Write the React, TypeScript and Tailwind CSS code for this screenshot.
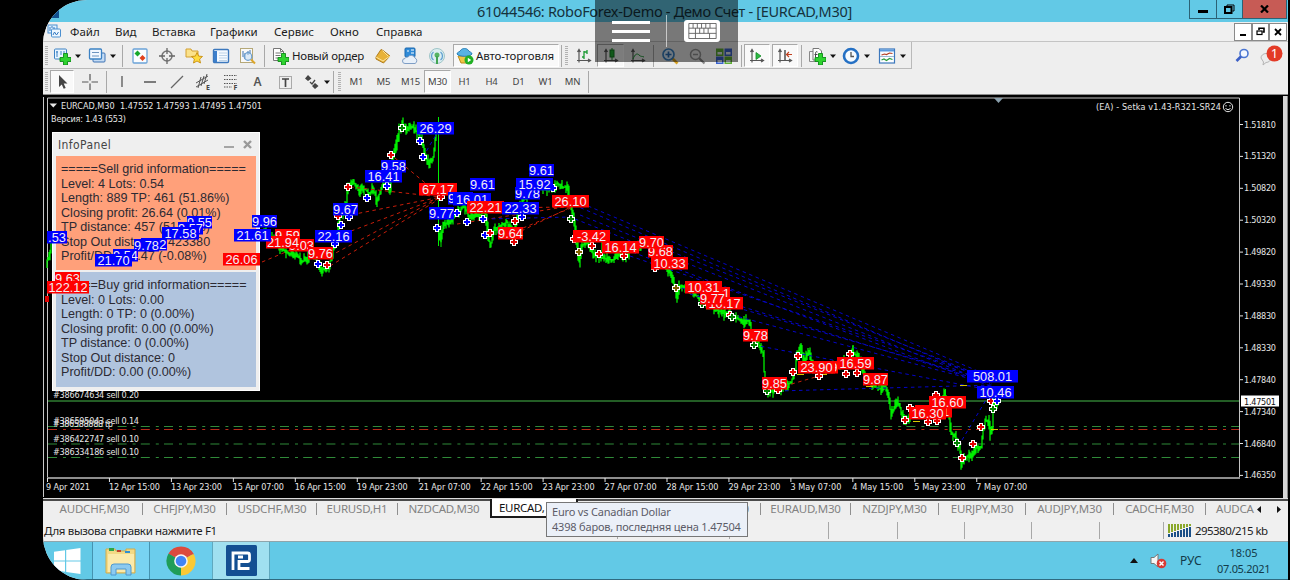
import type { ReactNode } from 'react';
import { clsx } from 'clsx';

type Pt = [number, number];

// x, y, width, text, colour
type Tag = [number, number, number, string, 'b' | 'r'];

const menu: [string, string][] = [
  ['Файл', 'w-[45px]'],
  ['Вид', 'w-[37px]'],
  ['Вставка', 'w-[58px]'],
  ['Графики', 'w-[64px]'],
  ['Сервис', 'w-[56px]'],
  ['Окно', 'w-[46px]'],
  ['Справка', 'w-[50px]'],
];

const timeframes = ['M1', 'M5', 'M15', 'M30', 'H1', 'H4', 'D1', 'W1', 'MN'];

const prices = ['1.51810', '1.51320', '1.50820', '1.50320', '1.49820', '1.49330', '1.48830', '1.48330', '1.47840', '1.47340', '1.46840', '1.46350'];

// label and drawn width
const dates: [string, number][] = [
  ['9 Apr 2021', 44], ['12 Apr 15:00', 51], ['13 Apr 23:00', 51], ['15 Apr 07:00', 51],
  ['16 Apr 15:00', 51], ['19 Apr 23:00', 51], ['21 Apr 07:00', 52], ['22 Apr 15:00', 52],
  ['23 Apr 23:00', 52], ['27 Apr 07:00', 52], ['28 Apr 15:00', 52], ['29 Apr 23:00', 52],
  ['3 May 07:00', 51], ['4 May 15:00', 51], ['5 May 23:00', 51], ['7 May 07:00', 51],
];

const sellInfo = [
  '=====Sell grid information=====',
  'Level: 4 Lots: 0.54',
  'Length: 889 TP: 461 (51.86%)',
  'Closing profit: 26.64 (0.01%)',
  'TP distance: 457 (51.41%)',
  'Stop Out distance: 423380',
  'Profit/DD: -85.47 (-0.08%)',
];

const buyInfo = [
  '=====Buy grid information=====',
  'Level: 0 Lots: 0.00',
  'Length: 0 TP: 0 (0.00%)',
  'Closing profit: 0.00 (0.00%)',
  'TP distance: 0 (0.00%)',
  'Stop Out distance: 0',
  'Profit/DD: 0.00 (0.00%)',
];

const quotes: Pt[][] = [
  [[47, 262], [50, 256], [52, 246]],
  [[260, 235], [266, 232], [272, 238], [280, 248], [290, 254], [300, 257], [303, 262], [310, 256], [316, 258], [320, 264], [323, 270], [330, 266], [332, 256], [337, 238], [341, 216], [347, 205], [348, 188], [352, 183], [356, 184], [360, 191], [366, 189], [370, 194], [374, 189], [378, 201], [382, 188], [387, 182], [391, 190], [393, 158], [398, 140], [400, 130], [403, 124], [406, 130], [414, 127], [420, 136], [423, 142], [426, 158], [430, 164], [434, 157], [436, 140], [437, 133]],
  [[439, 228], [441, 240], [444, 226], [450, 222], [458, 213], [465, 206], [470, 218], [480, 215], [486, 212], [489, 235], [491, 247], [495, 230], [500, 226], [508, 222], [514, 238], [518, 218], [520, 206], [530, 192], [540, 185], [546, 190], [553, 188], [558, 183], [563, 188], [568, 186], [571, 205], [574, 216], [577, 238], [580, 262], [582, 248], [587, 240], [591, 250], [596, 256], [606, 259], [614, 260], [620, 255], [628, 256], [633, 246], [642, 244], [650, 242], [656, 252], [666, 262], [671, 275], [675, 284], [677, 298], [680, 286], [690, 290], [702, 300], [714, 308], [725, 314], [735, 316], [744, 322], [750, 320], [753, 336], [758, 342], [764, 354], [766, 390], [772, 391], [780, 391], [786, 387], [792, 382], [796, 370], [797, 356], [801, 347], [805, 360], [810, 352], [814, 368], [826, 370], [838, 364], [848, 360], [853, 352], [858, 356], [864, 370], [872, 384], [880, 389], [886, 386], [889, 396], [892, 416], [897, 400], [901, 408], [905, 424], [912, 412], [925, 413], [935, 412], [945, 394], [949, 412], [952, 432], [958, 440], [961, 452], [962, 464], [966, 457], [972, 456], [977, 446], [982, 448], [984, 430], [986, 421], [989, 420], [991, 434], [993, 430], [993, 404], [996, 404], [1000, 402]],
];

const tags: Tag[] = [
  [47, 231, 20, '.53', 'b'],
  [187, 216, 25, '9.55', 'b'],
  [178, 222, 25, '9.57', 'b'],
  [162, 227, 37, '17.58', 'b'],
  [141, 238, 26, '9.72', 'b'],
  [134, 239, 25, '9.78', 'b'],
  [113, 249, 25, '9.54', 'b'],
  [95, 254, 37, '21.70', 'b'],
  [275, 229, 25, '9.59', 'r'],
  [289, 239, 25, '9.03', 'r'],
  [266, 236, 34, '21.94', 'r'],
  [252, 215, 25, '9.96', 'b'],
  [234, 229, 37, '21.61', 'b'],
  [223, 253, 37, '26.06', 'r'],
  [55, 272, 25, '9.63', 'r'],
  [47, 281, 42, '122.12', 'r'],
  [308, 247, 25, '9.76', 'r'],
  [315, 230, 37, '22.16', 'b'],
  [333, 203, 25, '9.67', 'b'],
  [381, 160, 25, '9.58', 'b'],
  [365, 170, 37, '16.41', 'b'],
  [417, 122, 37, '26.29', 'b'],
  [419, 183, 38, '67.17', 'r'],
  [448, 192, 25, '9.88', 'b'],
  [429, 207, 25, '9.77', 'b'],
  [453, 193, 38, '16.01', 'b'],
  [470, 178, 25, '9.61', 'b'],
  [467, 201, 37, '22.21', 'r'],
  [502, 202, 37, '22.33', 'b'],
  [515, 187, 25, '9.78', 'b'],
  [529, 164, 25, '9.61', 'b'],
  [516, 178, 37, '15.92', 'b'],
  [498, 227, 25, '9.64', 'r'],
  [552, 195, 37, '26.10', 'r'],
  [573, 230, 37, '-3.42', 'r'],
  [602, 241, 37, '16.14', 'r'],
  [648, 245, 25, '9.68', 'r'],
  [639, 236, 25, '9.70', 'r'],
  [651, 257, 37, '10.33', 'r'],
  [705, 287, 25, '9.91', 'r'],
  [706, 297, 37, '10.17', 'r'],
  [685, 281, 37, '10.31', 'r'],
  [700, 292, 25, '9.77', 'r'],
  [743, 329, 25, '9.78', 'r'],
  [762, 377, 25, '9.85', 'r'],
  [812, 361, 26, '9.89', 'r'],
  [798, 361, 37, '23.90', 'r'],
  [837, 357, 37, '16.59', 'r'],
  [863, 373, 25, '9.87', 'r'],
  [915, 405, 37, '16.11', 'r'],
  [909, 407, 37, '16.30', 'r'],
  [929, 396, 37, '16.60', 'r'],
  [967, 370, 51, '508.01', 'b'],
  [977, 386, 37, '10.46', 'b'],
];

// trade markers: x, y, fill
const marks: [number, number, string][] = [
  [318, 264, '#0000ff'], [327, 265, '#e00000'], [335, 244, '#0000ff'], [338, 216, '#e00000'], [341, 225, '#0000ff'],
  [348, 187, '#e00000'], [349, 217, '#0000ff'], [367, 198, '#0000ff'], [387, 186, '#0000ff'], [391, 155, '#e00000'],
  [402, 128, '#008000'], [420, 141, '#0000ff'], [423, 157, '#0000ff'], [441, 197, '#e00000'], [437, 228, '#0000ff'],
  [457, 213, '#0000ff'], [467, 222, '#0000ff'], [483, 219, '#0000ff'], [485, 235, '#0000ff'], [490, 233, '#e00000'],
  [515, 221, '#e00000'], [522, 217, '#0000ff'], [514, 242, '#e00000'], [553, 188, '#0000ff'], [571, 219, '#008000'],
  [574, 239, '#e00000'], [579, 252, '#806000'], [592, 246, '#e00000'], [599, 254, '#e00000'], [624, 256, '#e00000'],
  [655, 268, '#e00000'], [676, 288, '#806000'], [702, 304, '#008000'], [730, 315, '#e00000'], [732, 317, '#008000'],
  [754, 345, '#008000'], [767, 391, '#008000'], [778, 390, '#e00000'], [778, 384, '#e00000'], [793, 372, '#e00000'],
  [798, 356, '#e00000'], [819, 376, '#e00000'], [846, 374, '#e00000'], [850, 354, '#e00000'], [857, 373, '#e00000'],
  [910, 408, '#e00000'], [905, 420, '#e00000'], [928, 422, '#e00000'], [937, 421, '#e00000'], [936, 395, '#e00000'],
  [957, 443, '#008000'], [962, 458, '#e00000'], [973, 444, '#e00000'], [981, 427, '#e00000'], [991, 401, '#e00000'],
  [993, 409, '#008000'], [997, 401, '#0000ff'],
];

const redLinks = [
  'M395 158L441 196', 'M350 187L441 197', 'M345 216L441 197', 'M338 236L441 197', 'M330 256L441 197', 'M262 262L300 246', 'M330 266L441 198',
  'M457 224L571 206', 'M490 208L571 207', 'M515 234L571 207', 'M523 228L571 208', 'M778 388L819 376',
];

const blueLinks = [
  'M485 219L571 217', 'M588 206L992 377', 'M574 205L980 377', 'M580 215L992 380', 'M575 219L992 384', 'M600 240L990 386', 'M630 256L990 379',
  'M690 294L990 381', 'M675 286L990 383', 'M732 315L990 384', 'M754 345L990 390', 'M778 391L992 385', 'M962 440L992 390', 'M423 157L437 133',
];

function bars(points: Pt[]) {
  let seed = 7;
  const rnd = () => {
    seed = (seed * 16807) % 2147483647;
    return seed / 2147483647;
  };
  let d = '';
  for (let i = 0; i < points.length - 1; i++) {
    const [x0, y0] = points[i];
    const [x1, y1] = points[i + 1];
    const steps = Math.max(1, Math.round(x1 - x0));
    for (let s = 0; s < steps; s++) {
      const x = x0 + ((x1 - x0) * s) / steps;
      const a = y0 + ((y1 - y0) * s) / steps;
      const b = y0 + ((y1 - y0) * (s + 1)) / steps;
      const up = 0.5 + rnd() ** 2 * 6.5;
      const down = 0.5 + rnd() ** 2 * 6.5;
      d += `M${x.toFixed(1)} ${(Math.min(a, b) - up).toFixed(1)}V${(Math.max(a, b) + down).toFixed(1)}`;
    }
  }
  return d;
}

function Icon({ size = 18, children }: { size?: number; children: ReactNode }) {
  return (
    <svg width={size} height={size} viewBox="0 0 18 18" fill="none" className="shrink-0">
      {children}
    </svg>
  );
}

function Slot({ w, on, children }: { w: string; on?: boolean; children?: ReactNode }) {
  return (
    <div className={clsx('flex shrink-0 items-center justify-center', w, on ? 'h-[23px] border border-[#a9a9a9] border-r-white border-b-white bg-[#f9f9f9]' : 'h-full')}>
      {children}
    </div>
  );
}

function Sep({ w }: { w: string }) {
  return (
    <div className={clsx('flex h-full shrink-0 items-center justify-center', w)}>
      <div className="h-[22px] w-px bg-[#a8a8a8]" />
    </div>
  );
}

function Grip() {
  return (
    <div className="flex w-[7px] shrink-0 justify-center">
      <div className="h-5 w-[3px] bg-[repeating-linear-gradient(#b2b2b2_0_1px,#eeeeee_1px_2px)]" />
    </div>
  );
}

function Caret({ w = 'w-2' }: { w?: string }) {
  return (
    <div className={clsx('flex shrink-0 justify-center', w)}>
      <svg width="6" height="4" viewBox="0 0 6 4"><path d="M0 0.5h6L3 4z" fill="#111" /></svg>
    </div>
  );
}

const plus = <path d="M10.500 6.500h4v4h3.500v4h-3.500v3.500h-4v-3.500H7v-4h3.500z" fill="#2fd32f" stroke="#0c8a18" strokeWidth="0.9" />;
const axes = <path d="M4 15.500V3M2.500 5L4 2.500 5.500 5M2 13.500h13M13 12l2.500 1.500L13 15" stroke="#555" strokeWidth="1.200" />;

function TitleBar() {
  return (
    <div className="flex h-[22px] shrink-0 items-start bg-[#62c9e6]">
      <div className="flex h-[18px] w-[434px] items-end pl-1">
        <div className="h-3 w-3 bg-[#12508f]" />
      </div>
      <div className="w-[712px] text-[14.500px] leading-[22px] tracking-[-0.310px] whitespace-nowrap text-[#15323d]">61044546: RoboForex-Demo - Демо Счет - [EURCAD,M30]</div>
      <div className="flex h-[19px] w-[98px] border border-t-0 border-[#2b6275]">
        <div className="flex w-[27px] items-center justify-center border-r border-[#2b6275]">
          <div className="mt-1 h-[3px] w-[10px] bg-black" />
        </div>
        <div className="flex w-[26px] items-center justify-center border-r border-[#2b6275]">
          <svg width="11" height="10" viewBox="0 0 11 10" fill="none" stroke="#000"><path d="M3 2V1h7v6H8.500" /><rect x="1" y="3" width="6.500" height="6" strokeWidth="2" /></svg>
        </div>
        <div className="flex flex-1 items-center justify-center bg-[#c75b55]">
          <svg width="9" height="8" viewBox="0 0 9 8"><path d="M1 0.500l7 7M8 0.500l-7 7" stroke="#000" strokeWidth="2.200" /></svg>
        </div>
      </div>
    </div>
  );
}

function MenuBar() {
  return (
    <div className="flex h-5 shrink-0 items-center border-b border-[#c4c4c4] bg-[#f0f0f0]">
      <div className="flex w-[27px] pl-1">
        <svg width="15" height="15" viewBox="0 0 15 15" fill="none"><rect x="1" y="1" width="9" height="8" fill="#dff0ff" stroke="#4b8fd0" /><rect x="4.500" y="5" width="9" height="8" rx="1" fill="#eef7ff" stroke="#4b8fd0" /><path d="M6 11l1.500-3 2 3 2-3M3 3v4M5 2v2M7 3v2" stroke="#3579c0" /></svg>
      </div>
      {menu.map(([m, w]) => (
        <div key={m} className={clsx('shrink-0 text-[11.500px] whitespace-nowrap text-[#1c1c1c]', w)}>{m}</div>
      ))}
      <div className="ml-auto flex h-[18px] w-[54px] pr-px">
        <div className="flex flex-1 items-end justify-center border border-[#8a8a8a] bg-white pb-1"><div className="h-[2px] w-[6px] bg-black" /></div>
        <div className="flex flex-1 items-center justify-center border border-[#8a8a8a] bg-white">
          <svg width="9" height="9" viewBox="0 0 9 9" fill="none" stroke="#000" strokeWidth="1.200"><path d="M3 3V1.200h5V5H6.500" strokeWidth="1.600" /><rect x="1" y="4" width="5" height="3.500" /></svg>
        </div>
        <div className="flex flex-1 items-center justify-center border border-[#8a8a8a] bg-white">
          <svg width="8" height="8" viewBox="0 0 8 8"><path d="M1 1l6 6M7 1l-6 6" stroke="#000" strokeWidth="1.800" /></svg>
        </div>
      </div>
    </div>
  );
}

function MainToolbar() {
  return (
    <div className="flex h-[27px] shrink-0 items-center bg-[#eeeeee]">
      <div className="flex h-full w-[869px] shrink-0 items-center border-r border-b border-[#b9b9b9] pt-px">
        <Grip />
        <Slot w="w-6"><Icon><rect x="1.500" y="2" width="12" height="10" rx="1" fill="#e9f5ff" stroke="#3c82c4" /><path d="M4 4v6M3 5h2M8 4v4M11 4v3" stroke="#3c82c4" />{plus}</Icon></Slot>
        <Caret />
        <div className="w-[3px]" />
        <Slot w="w-6"><Icon><rect x="5" y="6" width="12" height="9" rx="1" fill="#c6dcf4" stroke="#3c72b4" /><rect x="1.500" y="2" width="12" height="10" rx="1" fill="#f2f8ff" stroke="#3c82c4" strokeWidth="1.300" /><path d="M4 5.500h7M4 9h7" stroke="#6d95c0" /></Icon></Slot>
        <Caret />
        <Sep w="w-[10px]" />
        <Slot w="w-[26px]"><Icon><rect x="2" y="2" width="14" height="14" rx="1" fill="#fbfdff" stroke="#6ba3d8" strokeWidth="1.300" /><path d="M6.500 3.500l3 3-3 3-3-3z" fill="#17a82a" /><path d="M11.500 8l3 3-3 3-3-3z" fill="#e0421e" /></Icon></Slot>
        <Slot w="w-[27px]"><Icon><circle cx="9" cy="9" r="5" stroke="#777" strokeWidth="1.500" /><path d="M9 1v6M9 11v6M1 9h6M11 9h6" stroke="#666" strokeWidth="1.300" /></Icon></Slot>
        <Slot w="w-[27px]"><Icon><path d="M1 2h5l1 2H13v6H1z" fill="#fbe28b" stroke="#d3a032" /><path d="M12 5.500l1.600 3.600 3.900.4-2.900 2.600.9 3.900-3.500-2-3.500 2 .9-3.900L6.500 9.500l3.900-.4z" fill="#ffdb3d" stroke="#c78d10" strokeWidth="0.900" /></Icon></Slot>
        <Slot w="w-[27px]"><Icon><rect x="1.500" y="2.500" width="15" height="13" rx="1" fill="#f5faff" stroke="#3c78bd" strokeWidth="1.400" /><path d="M2 4h3v11H2z" fill="#3d7fcb" /><path d="M7 6h8M7 8.500h8M7 11h8M7 13.500h8" stroke="#bdd3e8" /></Icon></Slot>
        <Slot w="w-[27px]"><Icon><rect x="1.500" y="1.500" width="12" height="14" fill="#f9f9f9" stroke="#b5a878" /><path d="M4 4v6M6 6v6M9 4v4M11 3v4" stroke="#3f74b0" /><circle cx="9" cy="9.500" r="3.800" fill="#bfdcf580" stroke="#6c9fcf" strokeWidth="1.200" /><path d="M12 12.500l4 4" stroke="#dba52a" strokeWidth="2" /></Icon></Slot>
        <Sep w="w-[7px]" />
        <Slot w="w-6"><Icon><path d="M2.500 1.500h7l3 3v9h-10z" fill="#fff" stroke="#777" /><path d="M9.500 1.500v3h3M4.500 6h6M4.500 8.500h5M4.500 11h3" stroke="#777" />{plus}</Icon></Slot>
        <div className="w-[77px] shrink-0 text-[11.500px] tracking-[-0.250px] whitespace-nowrap text-[#1c1c1c]">Новый ордер</div>
        <Slot w="w-[27px]"><Icon><path d="M2 10L7 2.500l2 1L16 9l-6.500 7L2 12z" fill="#e8b238" stroke="#a87310" strokeWidth="0.900" /><path d="M2 10l7 4L16 9M8.500 3.500L14 9" stroke="#fde49a" /></Icon></Slot>
        <Slot w="w-[27px]"><Icon><rect x="4" y="1" width="10" height="9" rx="1" fill="#2f8bd8" stroke="#1c68ae" /><path d="M6 4h2M10 3h3M10 6h3" stroke="#fff" /><path d="M4 16.500h10a3 3 0 0 0 0-5.500 4 4 0 0 0-7-1 3 3 0 0 0-3 1.500 2.500 2.500 0 0 0 0 5z" fill="#e8f0f9" stroke="#7f9ec5" /></Icon></Slot>
        <Slot w="w-[27px]"><Icon><circle cx="9" cy="9" r="7.500" fill="#dbeef0" stroke="#9fc5c8" /><path d="M5.500 13a5 5 0 0 1 0-8M12.500 13a5 5 0 0 0 0-8" stroke="#5f9fd0" strokeWidth="1.300" /><circle cx="9" cy="8" r="2.500" fill="#56b463" /><path d="M9 9v8" stroke="#43a552" strokeWidth="2" /></Icon></Slot>
        <div className="w-[3px]" />
        <div className="flex h-[23px] w-[106px] shrink-0 items-center border border-[#a9a9a9] border-r-white border-b-white bg-[#f9f9f9] pl-[2px]">
          <Icon><path d="M2 9h13l-3 7H5z" fill="#f0c545" stroke="#bb8b1c" /><path d="M1 7c0-2 3-2 4-4 1-2 6-2 7 0s4 2 4 4c-2 3-13 3-15 0z" fill="#57b2e5" stroke="#2a7fb6" /><circle cx="13" cy="13" r="4.500" fill="#22b025" /><path d="M11.800 10.800v4.400L15.200 13z" fill="#fff" /></Icon>
          <div className="pl-[2px] text-[11.500px] tracking-[-0.150px] whitespace-nowrap text-[#1c1c1c]">Авто-торговля</div>
        </div>
        <Sep w="w-[4px]" />
        <Grip />
        <Slot w="w-[27px]"><Icon>{axes}<path d="M9 4v8M9 10H7M9 5h2.500M12 3v4" stroke="#1d9b35" strokeWidth="1.300" /></Icon></Slot>
        <Slot w="w-[27px]" on><Icon>{axes}<path d="M10 1v12" stroke="#158a25" /><rect x="8" y="3" width="4" height="7" fill="#22b235" stroke="#137a20" /></Icon></Slot>
        <Slot w="w-[27px]"><Icon>{axes}<path d="M4 12c2-5 4-6 6-4s3 1 5 2" stroke="#1d9b35" /></Icon></Slot>
        <Sep w="w-[5px]" />
        <Slot w="w-[27px]"><Icon><path d="M11 11l5.500 5.500" stroke="#d8a223" strokeWidth="2.600" /><circle cx="7.500" cy="7.500" r="5.500" fill="#dcefff" stroke="#3d85c6" strokeWidth="1.700" /><path d="M4.500 7.500h6M7.500 4.500v6" stroke="#2a6fb8" strokeWidth="1.700" /></Icon></Slot>
        <Slot w="w-[27px]"><Icon><path d="M11 11l5.500 5.500" stroke="#888" strokeWidth="2.200" /><circle cx="7.500" cy="7.500" r="5" fill="#eee" stroke="#999" strokeWidth="1.500" /><path d="M5 7.500h5" stroke="#999" strokeWidth="1.500" /></Icon></Slot>
        <Slot w="w-[28px]"><Icon><path d="M1 1.500h7.500V9H1zM9.500 9.500H17V17H9.500z" fill="#5fae35" /><path d="M9.500 1.500H17V9H9.500zM1 9.500h7.500V17H1z" fill="#3c64cf" /><path d="M2.500 5h4.500v2.500H2.500zM11 5h4.500v2.500H11zM2.500 13h4.500v2.500H2.500zM11 13h4.500v2.500H11z" fill="#e8eef4" /></Icon></Slot>
        <Sep w="w-[6px]" />
        <Slot w="w-[26px]" on><Icon>{axes}<path d="M8 5.500l5 3.500-5 3.500z" fill="#2cba43" stroke="#138a26" strokeWidth="0.800" /></Icon></Slot>
        <div className="w-[2px]" />
        <Slot w="w-[26px]" on><Icon>{axes}<path d="M9 3v10" stroke="#444" strokeWidth="1.400" /><path d="M10.500 7.500h5.500M13 5l-2.500 2.500 2.500 2.500" stroke="#c2401e" strokeWidth="1.200" /></Icon></Slot>
        <Sep w="w-[7px]" />
        <Slot w="w-6"><Icon><path d="M1.500 4.500h8v10h-8z" fill="#f4f4f4" stroke="#888" /><path d="M5 1.500h6l2.500 2.500v9H5z" fill="#fff" stroke="#777" /><path d="M9.500 5c-2-1-2 0-2 5M6.500 7.500h3" stroke="#444" />{plus}</Icon></Slot>
        <Caret w="w-[7px]" />
        <div className="w-[3px]" />
        <Slot w="w-6"><Icon><circle cx="9" cy="9" r="7" fill="#f6fbff" stroke="#2470c4" strokeWidth="2.600" /><path d="M9 5v4.500h3" stroke="#555" strokeWidth="1.300" /></Icon></Slot>
        <Caret />
        <div className="w-[4px]" />
        <Slot w="w-6"><Icon><rect x="1.500" y="2" width="15" height="14" fill="#fbfdff" stroke="#3c78bd" strokeWidth="1.200" /><path d="M2 3.500h14" stroke="#5a9ade" strokeWidth="2" /><path d="M3.500 8l3-1 2 .5 3-1.500 3 .5" stroke="#b23c20" strokeWidth="1.200" /><path d="M2 9.500h14" stroke="#9bb8d4" /><path d="M3.500 13l2.500-1 2.500 1.500 3-2 3 1" stroke="#2a9a3a" strokeWidth="1.200" /></Icon></Slot>
        <Caret />
      </div>
      <div className="ml-auto flex w-[53px] items-center">
        <svg width="15" height="15" viewBox="0 0 15 15" fill="none"><circle cx="9" cy="5.500" r="4" fill="#f4f8ff" stroke="#4b76d2" strokeWidth="1.600" /><path d="M6 8.500L1.500 13" stroke="#3c5fc6" strokeWidth="2.600" /></svg>
        <svg width="26" height="22" viewBox="0 0 26 22" className="ml-2"><path d="M3 13a5 4.500 0 1 1 5 4.500L5 20l.5-3z" fill="#ececec" stroke="#b5b5b5" /><circle cx="16.500" cy="8.500" r="8" fill="#e33a26" /><text x="16.500" y="13" fontSize="13" textAnchor="middle" fill="#fff">1</text></svg>
      </div>
    </div>
  );
}

function DrawToolbar() {
  return (
    <div className="flex h-[26px] shrink-0 items-center border-b border-[#8b8b8b] bg-[#eeeeee]">
      <Grip />
      <Slot w="w-6" on><Icon><path d="M6 2v12l2.800-2.600 1.900 4.400 2-.9-2-4.300H14.500z" fill="#444" /></Icon></Slot>
      <Slot w="w-[31px]"><Icon><path d="M9 1v6.500M9 10.500V17M1 9h6.500M10.500 9H17" stroke="#555" strokeWidth="1.200" /></Icon></Slot>
      <Sep w="w-[3px]" />
      <Slot w="w-[28px]"><Icon><path d="M9 3v11" stroke="#555" strokeWidth="1.300" /></Icon></Slot>
      <Slot w="w-[27px]"><Icon><path d="M3 9h12" stroke="#555" strokeWidth="1.300" /></Icon></Slot>
      <Slot w="w-[27px]"><Icon><path d="M3 15L15 3" stroke="#666" strokeWidth="1.300" /></Icon></Slot>
      <Slot w="w-[27px]"><Icon><path d="M1 10L13 3M1 14l12-7M3 15l3-11M6 13l3-10M9 11l3-10" stroke="#555" /><text x="11" y="16.500" fontSize="7" fontWeight="bold" fill="#444">E</text></Icon></Slot>
      <Slot w="w-[27px]"><Icon><path d="M2 2.500h13M2 6.500h13M2 10.500h13M2 14h8" stroke="#555" strokeDasharray="1.500 1" /><text x="11.500" y="16.500" fontSize="7" fontWeight="bold" fill="#444">F</text></Icon></Slot>
      <Slot w="w-[27px]"><span className="text-[12px] font-semibold text-[#555]">A</span></Slot>
      <Slot w="w-[28px]"><Icon><rect x="3.500" y="3.500" width="12" height="12" stroke="#666" strokeDasharray="1 1" /><path d="M6 6h7M9.500 6v8" stroke="#444" strokeWidth="1.700" /></Icon></Slot>
      <Slot w="w-[25px]"><Icon><path d="M5 2l3.500 3.500L5 8 2 5.500zM12 10l3.500 3-3.500 3-3-3z" fill="#444" /><path d="M7 9l2 2 3-4" stroke="#444" strokeWidth="1.300" /></Icon></Slot>
      <Caret w="w-[6px]" />
      <Sep w="w-[6px]" />
      <Grip />
      {timeframes.map((t) => (
        <Slot key={t} w="w-[27px]" on={t === 'M30'}>
          <span className="pt-[2px] text-[9.500px] tracking-[-0.150px] text-[#444]">{t}</span>
        </Slot>
      ))}
      <Sep w="w-[4px]" />
    </div>
  );
}

function InfoBlock({ lines, tone }: { lines: string[]; tone: string }) {
  return (
    <div className={clsx('mr-[3px] ml-[3px] pl-[5px] font-[Liberation_Sans,sans-serif] text-[12.600px] leading-[14.500px] whitespace-nowrap text-[#2c2a33]', tone)}>
      {lines.map((l) => (
        <div key={l}>{l}</div>
      ))}
    </div>
  );
}

function InfoPanel() {
  return (
    <div className="absolute top-[37px] left-[9px] flex h-[259px] w-[208px] flex-col border border-white bg-[#efefef]">
      <div className="flex h-[23px] items-center pl-[5px] text-[#444]">
        <span className="text-[12px] tracking-[0.400px]">InfoPanel</span>
        <div className="mt-[5px] ml-auto h-[2px] w-[10px] bg-[#a5a5a5]" />
        <svg width="9" height="9" viewBox="0 0 9 9" className="mr-[7px] ml-[9px]"><path d="M1 1l7 7M8 1L1 8" stroke="#999" strokeWidth="2.400" /></svg>
      </div>
      <InfoBlock lines={sellInfo} tone="h-[114px] pt-[6px] bg-[#ffa07a] mb-[2px]" />
      <InfoBlock lines={buyInfo} tone="h-[115px] pt-[6px] bg-[#b0c4de]" />
    </div>
  );
}

function Chart() {
  return (
    <div className="relative h-[403px] shrink-0 bg-black font-[DejaVu_Sans_Condensed,DejaVu_Sans,sans-serif]">
      <svg width="1245" height="403" viewBox="43 95 1245 403" fill="none" className="block">
        <path d="M43.500 97V497" stroke="#c9c9c9" />
        <path d="M47.500 478V98H1239.500V478" stroke="#c4c4c4" />
        <path d="M47 478H1240" stroke="#8e8e8e" strokeWidth="2" />
        <path d="M1283 96h4v402h-4z" fill="#d6d6d6" />
        <path d="M1287 96h1v402h-1z" fill="#888" />
        <path d="M994 98h9l-4.500 5z" fill="#8ba0ad" />

        <path d="M48 401H1239" stroke="#2f7d32" strokeWidth="1.300" />
        <g strokeDasharray="9 6 3 5.2" strokeWidth="1.200">
          <path d="M48 426.500H1239" stroke="#2f8a38" />
          <path d="M48 429.500H1239" stroke="#b82a18" />
          <path d="M48 444H1239M48 457.500H1239" stroke="#2f8a38" />
        </g>

        <g fill="#e6e6e6" fontSize="9">
          <path d="M49.500 103.500h7.500l-3.750 4z" />
          <text x="61" y="109" textLength="201" xmlSpace="preserve">EURCAD,M30{'\u00a0'} 1.47552 1.47593 1.47495 1.47501</text>
          <text x="51" y="121.500" textLength="75">Версия: 1.43 (553)</text>
          <text x="1096" y="110" textLength="125">(EA) - Setka v1.43-R321-SR24</text>
          <text x="53" y="398" textLength="86">#386674634 sell 0.20</text>
          <text x="53" y="424" textLength="86">#386595043 sell 0.14</text>
          <text x="53" y="427" textLength="60">#386588888 tp</text>
          <text x="53" y="441.500" textLength="86">#386422747 sell 0.10</text>
          <text x="53" y="455" textLength="86">#386334186 sell 0.10</text>
          {prices.map((p, i) => (
            <text key={p} x="1244" y={127.500 + i * 31.900} textLength="32">{p}</text>
          ))}
          {dates.map(([d, w], i) => (
            <text key={d} x={i ? 47 + i * 61.950 : 46} y="490" textLength={w}>{d}</text>
          ))}
        </g>
        <g stroke="#e6e6e6">
          {prices.map((p, i) => (
            <path key={p} d={`M1240 ${124.500 + i * 31.900}h3`} />
          ))}
          {dates.map(([d], i) => (
            <path key={d} d={`M${47.500 + i * 61.950} 478v4`} />
          ))}
          <circle cx="1228" cy="107" r="4.700" />
          <path d="M1225.500 108.500q2.500 2.500 5 0M1226 105v1.500M1230 105v1.500" />
        </g>
        <path d="M1241 395.500h38v11h-38z" fill="#fff" />
        <text x="1244" y="404.500" fontSize="9" textLength="32" fill="#111">1.47501</text>

        <g stroke="#00ee00" strokeWidth="1.300">
          {quotes.map((q, i) => (
            <path key={i} d={bars(q)} />
          ))}
          <path d="M438.500 117V246M441 225v22M945.500 389v20" strokeWidth="1" />
          <path d="M801 343v14M853 345v12M602 240v15" />
        </g>
        <g stroke="#c81e0a" strokeDasharray="3.500 3.500">
          {redLinks.map((d) => <path key={d} d={d} />)}
        </g>
        <g stroke="#0505c8" strokeDasharray="3.500 3.500">
          {blueLinks.map((d) => <path key={d} d={d} />)}
        </g>
        <path d="M797 374.500h7M820 374.500h7M866 386.500h7M913 421.500h7M960 385.500h7M991 429.500h7" stroke="#d8c800" />
      </svg>

      <InfoPanel />

      <svg width="1245" height="403" viewBox="43 95 1245 403" className="absolute inset-0" fontFamily="Liberation Sans, sans-serif">
        {marks.map(([x, y, c], i) => (
          <path key={i} d={`M${x - 1} ${y - 3}h2v2h2v2h-2v2h-2v-2h-2v-2h2z`} fill={c} stroke="#fff" strokeWidth="2" paintOrder="stroke" />
        ))}
        <path d="M45 296h4v6h-4z" fill="#e00000" />
        {tags.map(([x, y, w, t, c], i) => (
          <g key={i}>
            <rect x={x} y={y} width={w} height="12.500" fill={c === 'b' ? '#0000ff' : '#ff0000'} />
            <text x={x + w / 2} y={y + 11} fontSize="12.800" textAnchor="middle" fill="#f3eef4">{t}</text>
          </g>
        ))}
      </svg>
    </div>
  );
}

function Tab({ w, children }: { w: string; children: string }) {
  return (
    <div className={clsx('flex shrink-0 items-center border-t-2 border-[#4a4a4a] pb-[3px]', w)}>
      <span className="flex-1 text-center text-[11.500px] tracking-[-0.200px] whitespace-nowrap text-[#828282]">{children}</span>
      <div className="h-3 w-px bg-[#8f8f8f]" />
    </div>
  );
}

function Tabs() {
  return (
    <div className="flex h-[22px] shrink-0 overflow-hidden border-t border-[#dcdcdc] bg-[#eeeeee]">
      <Tab w="w-[100px] pl-[4px]">AUDCHF,M30</Tab>
      <Tab w="w-[85px] pr-px">CHFJPY,M30</Tab>
      <Tab w="w-[89px]">USDCHF,M30</Tab>
      <Tab w="w-[81px]">EURUSD,H1</Tab>
      <div className="flex w-[92px] shrink-0 items-center justify-center border-t-2 border-[#4a4a4a] pb-[3px] text-[11.500px] tracking-[-0.200px] text-[#828282]">NZDCAD,M30</div>
      <div className="flex h-[19px] w-[88px] shrink-0 items-center border-x-2 border-b-2 border-[#1a1a1a] bg-white pl-[7px] text-[11.500px] tracking-[-0.300px] text-[#111]">EURCAD,</div>
      <div className="flex w-[183px] shrink-0 items-center justify-end border-t-2 border-[#4a4a4a] pb-[3px] text-[11.500px] tracking-[-0.200px] text-[#828282]">
        <span className="pr-[11px]">M30</span>
        <div className="h-3 w-px bg-[#8f8f8f]" />
      </div>
      <Tab w="w-[90px]">EURAUD,M30</Tab>
      <Tab w="w-[88px]">NZDJPY,M30</Tab>
      <Tab w="w-[87px]">EURJPY,M30</Tab>
      <Tab w="w-[88px]">AUDJPY,M30</Tab>
      <Tab w="w-[92px]">CADCHF,M30</Tab>
      <div className="flex flex-1 items-center border-t-2 border-[#4a4a4a] pb-[3px] pl-[10px] text-[11.500px] tracking-[-0.200px] text-[#828282]">
        <div className="w-[38px]">AUDCA</div>
        <svg width="26" height="7" viewBox="0 0 26 7" className="ml-[3px]"><path d="M4 0v7L0 3.500zM20 0v7l4-3.500z" fill="#111" /></svg>
      </div>
    </div>
  );
}

function StatusBar() {
  return (
    <div className="flex h-[22px] shrink-0 items-center border-b border-[#8fa5ab] bg-[#f0f0f0] text-[11.500px] whitespace-nowrap text-[#1c1c1c]">
      <div className="w-[574px] pl-px tracking-[-0.330px]">Для вызова справки нажмите F1</div>
      <div className="flex h-[17px]">
        <div className="w-[112px] border-l border-[#a8a8a8]" />
        <div className="w-[99px] border-l border-[#a8a8a8]" />
        <div className="w-[69px] border-l border-[#a8a8a8]" />
        <div className="w-[67px] border-l border-[#a8a8a8]" />
        <div className="w-[67px] border-l border-[#a8a8a8]" />
        <div className="w-[68px] border-l border-[#a8a8a8]" />
        <div className="w-[64px] border-l border-[#a8a8a8]" />
        <div className="w-[5px] border-l border-[#a8a8a8]" />
      </div>
      <svg width="24" height="13" viewBox="0 0 24 13">
        {[0, 1, 2, 3, 4, 5, 6, 7].map((n) => (
          <g key={n}>
            <path d={`M${n * 3 + 1} 0v${9 - n}`} stroke="#8aa82b" strokeWidth="2" />
            <path d={`M${n * 3 + 1} ${10 - n}V13`} stroke="#1b4f87" strokeWidth="2" />
          </g>
        ))}
      </svg>
      <div className="pl-[3px] tracking-[-0.550px]">295380/215 kb</div>
    </div>
  );
}

function TaskBar() {
  return (
    <div className="flex h-[38px] shrink-0 items-stretch border-b border-[#2f6a80] bg-[#62c9e6]">
      <div className="flex w-[49px] items-center pl-[11px]">
        <svg width="27" height="26" viewBox="0 0 27 26" fill="#fff"><path d="M0 3.800L11 2.200V12.400H0zM12.200 2L26.500 0V12.400H12.200zM0 13.500h11v10.200L0 22.100zM12.200 13.500h14.300V26l-14.300-2z" /></svg>
      </div>
      <div className="flex w-[58px] items-center justify-center border-x border-[#4593b0] bg-[#78d3f2]">
        <svg width="32" height="30" viewBox="0 0 32 30"><path d="M1 3h9l1 2h10V3h9v24H1z" fill="#f3da85" stroke="#cfab4c" /><path d="M3 8h26v18H3z" fill="#fbeaab" /><path d="M4 2h5v3H4z" fill="#2ca64a" /><path d="M12 4h4v2h-4z" fill="#c4412c" /><path d="M20 5h5v2h-5z" fill="#2f8fd0" /><path d="M6 29v-8q0-3 3-3h14q3 0 3 3v8h-5v-6H11v6z" fill="#8ccaf0" stroke="#4c98cf" /></svg>
      </div>
      <div className="flex w-[62px] items-center justify-center bg-[#6bcdec]">
        <svg width="30" height="30" viewBox="0 0 30 30">
          <path d="M15 15L2.440 7.750A14.500 14.500 0 0 1 27.560 7.750z" fill="#dc4a3d" />
          <path d="M15 15L27.560 7.750A14.500 14.500 0 0 1 15 29.500z" fill="#fbc934" />
          <path d="M15 15V29.500A14.500 14.500 0 0 1 2.440 7.750z" fill="#1f9d58" />
          <path d="M15 8.300H27.900L27.560 7.750 15 7z" fill="#dc4a3d" />
          <path d="M15 29.500L21 18.500 15 15z" fill="#fbc934" />
          <path d="M9.200 18.300L2.440 7.750 15 15z" fill="#1f9d58" />
          <circle cx="15" cy="15" r="6.800" fill="#f6f6f6" />
          <circle cx="15" cy="15" r="5.300" fill="#4285f4" />
        </svg>
      </div>
      <div className="flex w-[58px] items-center justify-center border-x border-[#5fa9bf] bg-[#a0e0f0]">
        <svg width="31" height="31" viewBox="0 0 31 31"><rect width="31" height="31" rx="1.500" fill="#134f92" /><path d="M7 25V8h14.500q2 0 2 2v4.500q0 2-2 2H13v7h10.500M12 12h5" fill="none" stroke="#fff" strokeWidth="2.800" /></svg>
      </div>
      <div className="ml-auto flex items-center text-[11px] whitespace-nowrap text-[#123b4a]">
        <svg width="8" height="5" viewBox="0 0 8 5"><path d="M0 5h8L4 0z" fill="#111" /></svg>
        <svg width="17" height="16" viewBox="0 0 17 16" className="ml-[12px]"><path d="M1 4.500h3l4-3.500v13l-4-3.500H1z" fill="#f6f6f6" stroke="#777" /><circle cx="11.500" cy="10.500" r="4.800" fill="#d83a35" /><path d="M9.500 8.500l4 4M13.500 8.500l-4 4" stroke="#fff" strokeWidth="1.500" /></svg>
        <div className="ml-[13px] w-[37px] text-[12px]">РУС</div>
        <div className="mr-[18px] w-[53px] text-center leading-4">
          <div>18:05</div>
          <div className="tracking-[-0.300px]">07.05.2021</div>
        </div>
      </div>
    </div>
  );
}

function RemoteOverlay() {
  return (
    <div className="absolute top-0 left-[595px] flex h-[62px] w-[143px] items-center bg-black/50">
      <div className="ml-[17px] flex w-[38px] flex-col gap-[6px] pt-px">
        <div className="h-[3px] bg-white" />
        <div className="h-[3px] bg-white" />
        <div className="h-[3px] bg-white" />
      </div>
      <div className="ml-[16px] h-8 w-px bg-white/60" />
      <div className="ml-[17px] flex h-[22px] w-[36px] items-center justify-center rounded-[3px] bg-white">
        <svg width="29" height="16" viewBox="0 0 30 17" fill="none" stroke="#555" strokeWidth="0.900">
          <path d="M.5.5h29v16H.5zM.5 5.500h29M.5 11h29M5 .5v5M9.500.5v5M14 .5v5M18.500.5v5M23 .5v5M7.500 5.500V11M12 5.500V11M16.500 5.500V11M21 5.500V11M7.500 11v5.500M22.500 11v5.500" />
        </svg>
      </div>
    </div>
  );
}

export default function App() {
  return (
    <div className="relative h-[580px] w-[1290px] overflow-hidden bg-black pr-[2px] pl-[43px] font-[Noto_Sans,sans-serif]">
      <div className="flex h-[580px] w-[1245px] flex-col overflow-hidden rounded-l-[44px] bg-[#eeeeee]">
        <TitleBar />
        <MenuBar />
        <MainToolbar />
        <DrawToolbar />
        <Chart />
        <Tabs />
        <StatusBar />
        <TaskBar />
      </div>
      <RemoteOverlay />
      <div className="absolute top-[502px] left-[546px] h-[35px] w-[202px] border border-[#777] bg-[#ebf0f8] pt-[2px] pl-[5px] text-[11px] leading-[14.500px] tracking-[-0.190px] whitespace-nowrap text-[#5c5c68]">
        <div>Euro vs Canadian Dollar</div>
        <div>4398 баров, последняя цена 1.47504</div>
      </div>
    </div>
  );
}
